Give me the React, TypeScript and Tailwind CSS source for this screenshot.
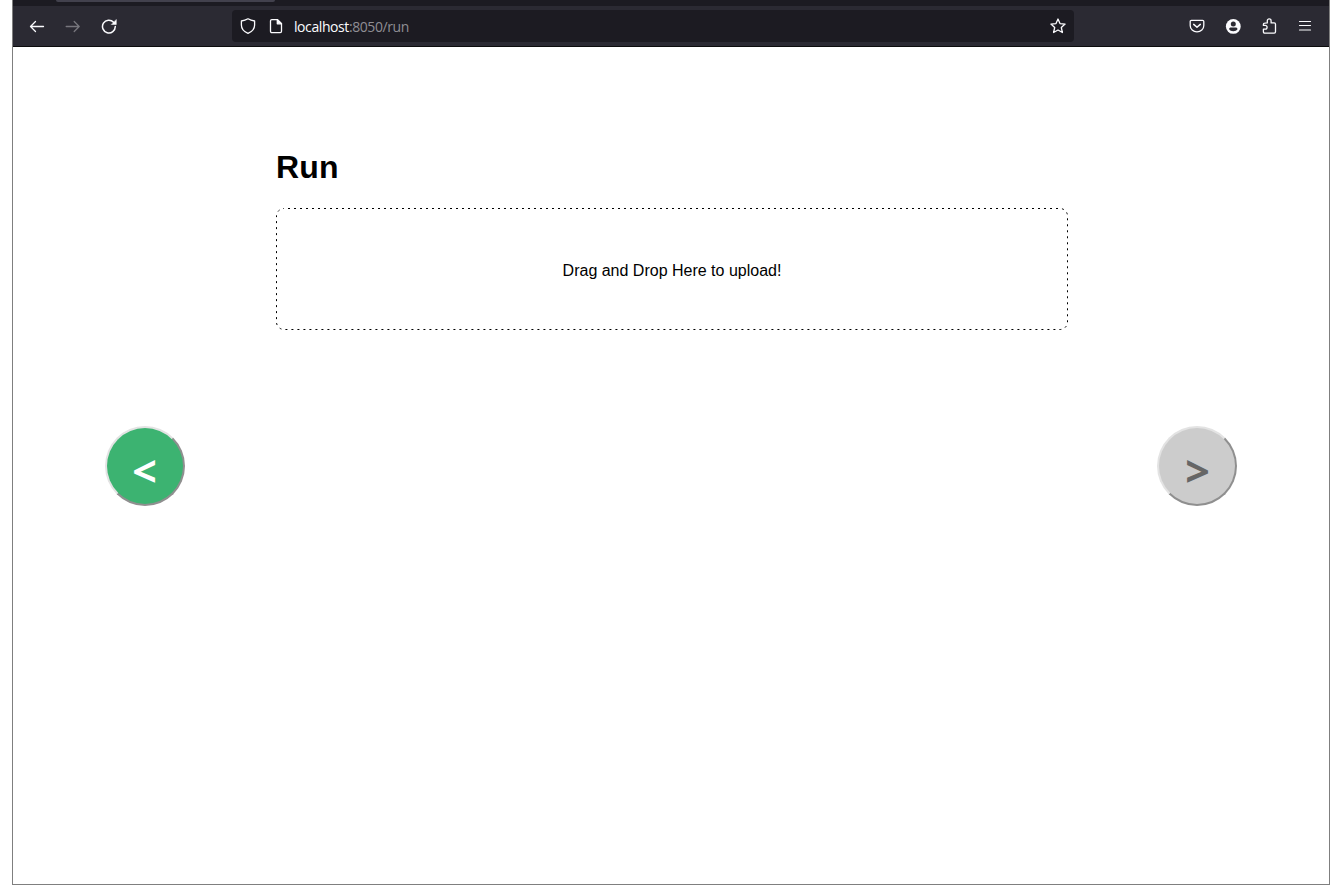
import type { ReactNode } from "react";

function Icon({ children, className = "" }: { children: ReactNode; className?: string }) {
  return (
    <svg
      viewBox="0 0 16 16"
      className={`size-4 shrink-0 ${className}`}
      fill="none"
      stroke="currentColor"
      strokeWidth="1.3"
      strokeLinecap="round"
      strokeLinejoin="round"
    >
      {children}
    </svg>
  );
}

function Toolbar() {
  return (
    <div className="flex h-10 shrink-0 items-center bg-[#2b2a33] text-[#fbfbfe]">
      <div className="flex w-[219px] shrink-0 items-center gap-5 pl-4">
        <Icon>
          <path d="M14.5 8.5h-13M6.5 3.5l-5 5 5 5" />
        </Icon>
        <Icon className="text-[#77767d]">
          <path d="M1.2 8.5h13M9.2 3.5l5 5-5 5" />
        </Icon>
        <Icon>
          <path d="M14.3 8.5A6.4 6.4 0 1 1 12.6 4.2" strokeWidth="1.5" />
          <path d="M15.3 1.8v4.7h-4.7z" fill="currentColor" strokeWidth=".5" />
        </Icon>
      </div>
      <div className="flex h-8 w-[842px] shrink-0 items-center rounded bg-[#1c1b22] pr-2 pl-2">
        <Icon>
          <path d="M8 .8c2 1.2 4.2 1.9 6.6 2.2v4.1c0 3.6-2.6 6.7-6.6 8.3-4-1.6-6.6-4.7-6.6-8.3V3C3.8 2.7 6 2 8 .8z" />
        </Icon>
        <Icon className="ml-3">
          <path d="M3.8 1.6h5.7l4 4v7.7a1.3 1.3 0 0 1-1.3 1.3H3.8a1.3 1.3 0 0 1-1.3-1.3V2.9a1.3 1.3 0 0 1 1.3-1.3z" />
          <path d="M9.3 1.6v4.2h4.2z" fill="currentColor" />
        </Icon>
        <span className="ml-[10px] grow pt-0.5 font-['Open_Sans','Noto_Sans',sans-serif] text-[14px] leading-4 tracking-[-0.42px]">
          localhost<span className="text-[#8f8e94]">:8050/run</span>
        </span>
        <Icon>
          <path d="m8 1 2 4.6 5.1.5-3.8 3.4 1.1 5L8 12l-4.4 2.5 1.1-5L.9 6.1 6 5.6z" />
        </Icon>
      </div>
      <div className="flex grow items-center justify-end gap-5 pr-4">
        <Icon>
          <path d="M2.4 2.4h11.2c.7 0 1.2.5 1.2 1.2v3.8c0 3.8-3 6.5-6.8 6.5S1.2 11.2 1.2 7.4V3.6c0-.7.5-1.2 1.2-1.2z" />
          <path d="M4.7 6.4 8 9.3l3.3-2.9" strokeWidth="1.5" />
        </Icon>
        <Icon>
          <circle cx="8.3" cy="8.4" r="7.4" fill="currentColor" stroke="none" />
          <circle cx="8.3" cy="6" r="2.5" fill="#2b2a33" stroke="none" />
          <path d="M4 11.1c.2-1 1-1.6 2-1.6h4.6c1 0 1.8.6 2 1.6-.9 1.4-2.4 2.2-4.3 2.2S4.9 12.5 4 11.1z" fill="#2b2a33" stroke="none" />
        </Icon>
        <Icon>
          <path d="M6.3 4.9V2.7a1.9 1.9 0 0 1 3.8 0v2.2h3.1c.8 0 1.3.5 1.3 1.3v7.6c0 .8-.5 1.3-1.3 1.3H3.7c-.8 0-1.3-.5-1.3-1.3v-2.6h1.8a1.9 1.9 0 0 0 0-3.8H2.4v-1c0-.8.5-1.3 1.3-1.3z" />
        </Icon>
        <Icon>
          <path d="M2.5 3.5h11M2.5 7.5h11M2.5 12h11" strokeWidth="1.2" />
        </Icon>
      </div>
    </div>
  );
}

export default function App() {
  return (
    <div className="h-[890px] w-[1337px] overflow-hidden bg-white pl-3 font-['Liberation_Sans',Arial,sans-serif] text-black">
      <div className="flex h-[885px] w-[1318px] flex-col border-x border-b border-[#7f7f7f]">
        <div className="h-1.5 shrink-0 bg-[#1c1b22] pl-[43px]">
          <div className="h-0.5 w-[219px] rounded-b bg-[#42414d]" />
        </div>
        <Toolbar />
        <div className="h-px shrink-0 bg-[#0c0c0d]" />
        <main className="flex grow items-start pl-[92px]">
          <button className="mt-[379px] flex size-20 shrink-0 items-center justify-center rounded-full border-2 border-[#e3e3e3] border-r-[#8f8f8f] border-b-[#8f8f8f] bg-[#3cb371] pt-2 pr-px font-['Open_Sans',sans-serif] text-[43px] leading-none font-bold text-white">
            &lt;
          </button>
          <section className="mt-[98px] ml-[91px] w-[792px] shrink-0">
            <h1 className="text-[32px] leading-[44px] font-bold tracking-[0.2px]">Run</h1>
            <div className="relative mt-[19px] flex h-[122px] items-center justify-center pt-1 text-base">
              <svg className="absolute inset-0 size-full" fill="none" stroke="black" aria-hidden="true">
                <rect x="0.5" y="0.5" width="791" height="121" rx="7.5" strokeDasharray="2 4" strokeDashoffset="-4" />
              </svg>
              Drag and Drop Here to upload!
            </div>
          </section>
          <button className="mt-[379px] ml-[89px] flex size-20 shrink-0 items-center justify-center rounded-full border-2 border-[#e3e3e3] border-r-[#8f8f8f] border-b-[#8f8f8f] bg-[#cccccc] pt-2 pl-px font-['Open_Sans',sans-serif] text-[43px] leading-none font-bold text-[#666666]">
            &gt;
          </button>
        </main>
      </div>
    </div>
  );
}
